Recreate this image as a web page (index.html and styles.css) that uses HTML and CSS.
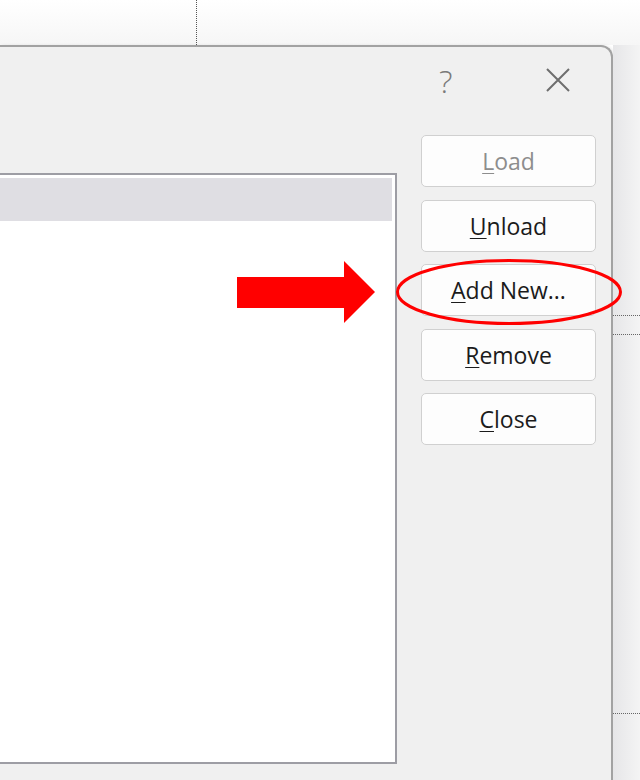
FILE: index.html
```html
<!DOCTYPE html>
<html lang="en">
<head>
  <meta charset="UTF-8">
  <title>Add-ins</title>
  <link rel="stylesheet" href="styles.css">
</head>
<body>
  <div class="screen">
    <div class="desktop-top"><div class="guide"></div></div>

    <div class="workspace">
      <div class="dialog">
        <div class="titlebar">
          <span class="help">?</span>
          <svg class="close-x" width="26" height="26" viewBox="0 0 26 26">
            <path d="M2 2 L24 24 M24 2 L2 24" stroke="#6e6e6e" stroke-width="2" fill="none"/>
          </svg>
        </div>

        <div class="dialog-body">
          <div class="listbox">
            <div class="list-head"></div>
          </div>

          <div class="buttons">
            <button class="btn disabled"><u>L</u>oad</button>
            <button class="btn"><u>U</u>nload</button>
            <button class="btn"><u>A</u>dd New...</button>
            <button class="btn"><u>R</u>emove</button>
            <button class="btn"><u>C</u>lose</button>
          </div>
        </div>
      </div>

      <div class="backdrop">
        <div class="dots first"></div>
        <div class="dots second"></div>
        <div class="dots third"></div>
      </div>
    </div>

    <!-- callout drawn over the screenshot -->
    <svg class="arrow" width="140" height="64" viewBox="0 0 140 64">
      <polygon points="0,16 107,16 107,0 138,31 107,62 107,47 0,47" fill="#ff0000"/>
    </svg>
    <svg class="ring" width="232" height="72" viewBox="0 0 232 72">
      <ellipse cx="116" cy="36" rx="111.5" ry="31.5" stroke="#ff0000" stroke-width="3" fill="none"/>
    </svg>
  </div>
</body>
</html>
```

FILE: styles.css
```css
body {
  margin: 0;
  background: #fff;
  font-family: 'Open Sans', 'Noto Sans', sans-serif;
}

.screen {
  position: relative;
  width: 640px;
  height: 780px;
  overflow: hidden;
  background: #fff;
}

.desktop-top {
  height: 45px;
  background: linear-gradient(#ffffff, #f6f6f6);
}

.guide {
  margin-left: 196px;
  width: 0;
  height: 45px;
  border-left: 1px dotted #555;
}

.workspace {
  display: flex;
  height: 735px;
}

.dialog {
  width: 611px;
  flex: none;
  background: #f0f0f0;
  border-top: 2px solid #a2a2a2;
  border-right: 2px solid #a2a2a2;
  border-top-right-radius: 12px;
  box-shadow: 2px 0 3px rgba(0,0,0,0.08);
}

.titlebar {
  height: 88px;
  display: flex;
  align-items: flex-start;
  padding-top: 20px;
  box-sizing: border-box;
  padding-left: 439px;
}

.help {
  font-size: 32px;
  font-weight: 300;
  line-height: 28px;
  color: #7a7a7a;
  width: 16px;
}

.close-x {
  margin-left: 90px;
}

.dialog-body {
  display: flex;
  align-items: flex-start;
  gap: 24px;
}

.listbox {
  box-sizing: border-box;
  width: 397px;
  height: 591px;
  margin-top: 38px;
  background: #fff;
  border: 2px solid #9d9da4;
  border-left: none;
  padding: 3px 3px 0 0;
}

.list-head {
  height: 43px;
  background: #dfdee3;
}

.buttons {
  display: flex;
  flex-direction: column;
  gap: 12.5px;
  width: 175px;
}

.btn {
  height: 52px;
  background: #fdfdfd;
  border: 1px solid #d0d0d0;
  border-radius: 5px;
  font-family: 'Open Sans', 'Noto Sans', sans-serif;
  font-size: 23px;
  color: #1b1b1b;
  padding: 0;
}

.btn u {
  text-underline-offset: 3px;
  text-decoration-thickness: 1px;
}

.btn.disabled {
  color: #8d8d8d;
}

.backdrop {
  flex: 1;
  background: linear-gradient(90deg, #e6e6e8, #f4f4f4);
  padding-top: 270px;
}

.dots {
  border-top: 1px dotted #666;
}

.second {
  margin-top: 18px;
}

.third {
  margin-top: 378px;
}

.arrow {
  position: absolute;
  left: 237px;
  top: 261px;
}

.ring {
  position: absolute;
  left: 393px;
  top: 256px;
}
```
